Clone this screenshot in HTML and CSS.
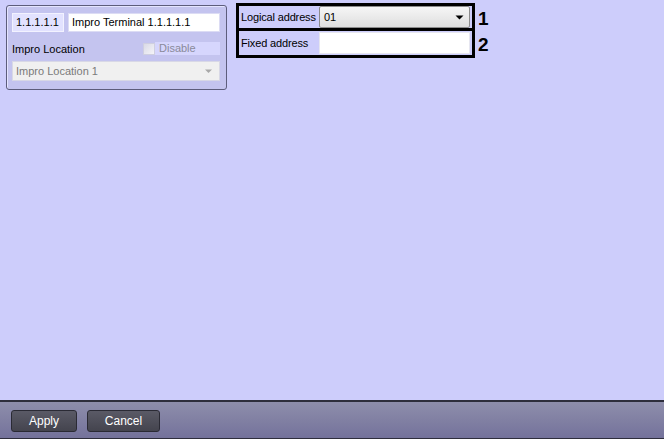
FILE: index.html
```html
<!DOCTYPE html>
<html>
<head>
<meta charset="utf-8">
<link rel="stylesheet" href="styles.css">
</head>
<body>
<div class="page">
  <div class="main">
    <div class="panel">
      <div class="row-top">
        <div class="idbox">1.1.1.1.1</div>
        <div class="namebox">Impro Terminal 1.1.1.1.1</div>
      </div>
      <div class="row-loc">
        <span class="loc-label">Impro Location</span>
        <span class="chk"></span>
        <span class="chk-label">Disable</span>
      </div>
      <div class="combo-dis">
        <span>Impro Location 1</span>
        <svg width="9" height="5" viewBox="0 0 9 5"><path d="M1 0.5h7L4.5 4z" fill="#a8a8a8"/></svg>
      </div>
    </div>
    <div class="addr">
      <div class="addr-boxes">
        <div class="addr-row first">
          <span class="addr-label">Logical address</span>
          <div class="combo">
            <span>01</span>
            <svg width="9" height="5" viewBox="0 0 9 5"><path d="M0.5 0.5h8L4.5 4.5z" fill="#000"/></svg>
          </div>
        </div>
        <div class="addr-row second">
          <span class="addr-label">Fixed address</span>
          <div class="textbox"></div>
        </div>
      </div>
      <div class="nums">
        <span class="num">1</span>
        <span class="num">2</span>
      </div>
    </div>
  </div>
  <div class="footer">
    <button class="btn btn-apply">Apply</button>
    <button class="btn btn-cancel">Cancel</button>
  </div>
</div>
</body>
</html>
```

FILE: styles.css
```css
html, body {
  margin: 0;
  padding: 0;
}
body {
  font-family: "Liberation Sans", Arial, sans-serif;
  font-size: 11px;
  color: #000;
}
.page {
  width: 664px;
  height: 439px;
  display: flex;
  flex-direction: column;
  background: #cdcdfb;
}
.main {
  flex: 1;
  display: flex;
  align-items: flex-start;
  padding: 3px 0 0 6px;
}
.panel {
  box-sizing: border-box;
  width: 221px;
  height: 85px;
  margin-top: 2px;
  border: 1px solid #5d5d7c;
  border-radius: 3px;
  background: #c4c4ef;
  box-shadow: inset 1px 1px 0 #e4e4ff;
  padding: 7px 6px 0 5px;
  display: flex;
  flex-direction: column;
}
.row-top {
  display: flex;
  gap: 4px;
  height: 19px;
}
.idbox {
  box-sizing: border-box;
  width: 52px;
  height: 19px;
  background: #e2e2ff;
  border: 1px solid #f2f2ff;
  padding: 2px 0 0 3px;
  white-space: nowrap;
}
.namebox {
  box-sizing: border-box;
  flex: 1;
  height: 19px;
  background: #fff;
  border: 1px solid #dcdcf4;
  padding: 2px 0 0 3px;
  white-space: nowrap;
}
.row-loc {
  display: flex;
  align-items: center;
  height: 13px;
  margin-top: 10px;
}
.loc-label {
  flex: 1;
  white-space: nowrap;
}
.chk {
  box-sizing: border-box;
  width: 12px;
  height: 12px;
  background: linear-gradient(135deg, #dadae6, #f4f4f8);
  border: 1px solid #cfcfe0;
}
.chk-label {
  width: 61px;
  height: 13px;
  line-height: 13px;
  background: #d6d6fd;
  color: #8a8a9a;
  padding-left: 4px;
}
.combo-dis {
  box-sizing: border-box;
  margin-top: 6px;
  height: 20px;
  background: #f0f0f0;
  border: 1px solid #d8d8e6;
  color: #7a7a7a;
  display: flex;
  align-items: center;
  justify-content: space-between;
  padding: 0 6px 0 3px;
  white-space: nowrap;
}
.addr {
  display: flex;
  margin-left: 9px;
}
.addr-boxes {
  display: flex;
  flex-direction: column;
}
.addr-row {
  box-sizing: border-box;
  width: 239px;
  border: 3px solid #000;
  display: flex;
  align-items: center;
  padding-left: 2px;
}
.addr-row.first {
  height: 28px;
}
.addr-row.second {
  height: 27px;
  border-top: 0;
}
.addr-label {
  width: 78px;
  white-space: nowrap;
  letter-spacing: -0.15px;
}
.combo {
  box-sizing: border-box;
  width: 151px;
  height: 22px;
  border: 1px solid #8c8c8c;
  border-radius: 2px;
  background: linear-gradient(#f6f6f6, #dedede);
  display: flex;
  align-items: center;
  justify-content: space-between;
  padding: 0 5px 0 4px;
}
.textbox {
  box-sizing: border-box;
  width: 151px;
  height: 22px;
  background: #fff;
  border: 1px solid #e6e6f0;
}
.nums {
  display: flex;
  flex-direction: column;
  padding-left: 3px;
  padding-top: 3px;
}
.num {
  font-family: "Liberation Sans", Arial, sans-serif;
  font-weight: bold;
  font-size: 19px;
  line-height: 25px;
  height: 26px;
}
.footer {
  box-sizing: border-box;
  height: 39px;
  border-top: 2px solid #2e2e3c;
  border-bottom: 1px solid #2e2e3c;
  background: linear-gradient(#8e8eab, #74729b);
  display: flex;
  align-items: center;
  gap: 10px;
  padding: 0 0 0 11px;
}
.btn {
  box-sizing: border-box;
  height: 22px;
  border: 1px solid #2a2a34;
  border-radius: 3px;
  background: linear-gradient(#5a5a66, #44444e);
  color: #fff;
  font-family: "Liberation Sans", Arial, sans-serif;
  font-size: 12px;
  padding: 0;
  margin-top: 2px;
}
.btn-apply {
  width: 66px;
}
.btn-cancel {
  width: 73px;
}
```
